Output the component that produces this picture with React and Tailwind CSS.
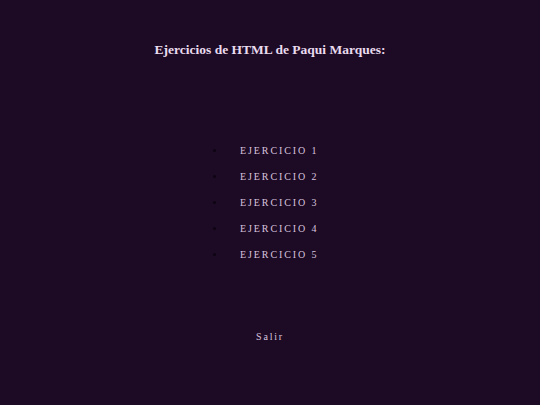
import React from 'react';

const ejercicios = ['EJERCICIO 1', 'EJERCICIO 2', 'EJERCICIO 3', 'EJERCICIO 4', 'EJERCICIO 5'];

export default function App() {
  return (
    <div
      className="w-[540px] h-[405px] bg-[#1d0a24] flex flex-col items-center"
      style={{ fontFamily: '"Liberation Serif", serif' }}
    >
      <h1 className="mt-[41px] text-[13.5px] leading-[18px] font-bold text-[#eadcef]">
        Ejercicios de HTML de Paqui Marques:
      </h1>

      <ul className="mt-[84px] w-full pl-[226px] list-disc marker:text-[#0e0412] flex flex-col gap-[10px]">
        {ejercicios.map((e) => (
          <li key={e} className="text-[10px] leading-[16px] tracking-[1.9px] text-[#d8c4df]">
            <a href="#" className="ml-[14px] text-[#d8c4df]">{e}</a>
          </li>
        ))}
      </ul>

      <a href="#" className="mt-[66px] text-[10px] leading-[16px] tracking-[1.8px] text-[#d8c4df]">
        Salir
      </a>
    </div>
  );
}
